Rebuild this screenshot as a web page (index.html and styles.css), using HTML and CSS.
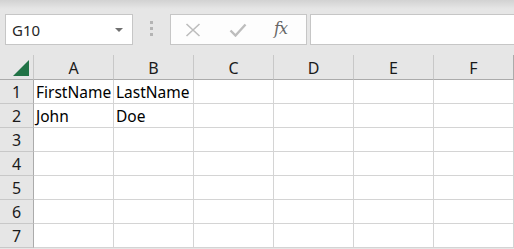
FILE: index.html
```
<!DOCTYPE html>
<html>
<head>
<meta charset="utf-8">
<link rel="stylesheet" href="styles.css">
</head>
<body>
<div class="toolbar">
  <div class="namebox">
    <span class="name">G10</span>
    <span class="arrow"></span>
  </div>
  <div class="grip"><i></i><i></i><i></i></div>
  <div class="fbuttons">
    <svg class="ico-x" width="16" height="14" viewBox="0 0 16 14"><path d="M1.5 1 L14.5 13 M14.5 1 L1.5 13" stroke="#bdbdbd" stroke-width="1.6" fill="none"/></svg>
    <svg class="ico-check" width="18" height="14" viewBox="0 0 18 14"><path d="M1.5 7.5 L6.5 12.5 L16.5 1.5" stroke="#bdbdbd" stroke-width="2.4" fill="none"/></svg>
    <span class="fx">fx</span>
  </div>
  <div class="finput"></div>
</div>
<div class="sheet">
  <div class="corner"><span class="tri"></span></div>
  <div class="ch">A</div><div class="ch">B</div><div class="ch">C</div><div class="ch">D</div><div class="ch">E</div><div class="ch last">F</div>

  <div class="rh">1</div><div class="c">FirstName</div><div class="c">LastName</div><div class="c"></div><div class="c"></div><div class="c"></div><div class="c"></div>
  <div class="rh">2</div><div class="c">John</div><div class="c">Doe</div><div class="c"></div><div class="c"></div><div class="c"></div><div class="c"></div>
  <div class="rh">3</div><div class="c"></div><div class="c"></div><div class="c"></div><div class="c"></div><div class="c"></div><div class="c"></div>
  <div class="rh">4</div><div class="c"></div><div class="c"></div><div class="c"></div><div class="c"></div><div class="c"></div><div class="c"></div>
  <div class="rh">5</div><div class="c"></div><div class="c"></div><div class="c"></div><div class="c"></div><div class="c"></div><div class="c"></div>
  <div class="rh">6</div><div class="c"></div><div class="c"></div><div class="c"></div><div class="c"></div><div class="c"></div><div class="c"></div>
  <div class="rh">7</div><div class="c"></div><div class="c"></div><div class="c"></div><div class="c"></div><div class="c"></div><div class="c"></div>
</div>
</body>
</html>
```
FILE: styles.css
```
html, body {
  margin: 0;
  padding: 0;
  background: #e6e6e6;
  overflow: hidden;
  font-family: "Noto Sans", "Open Sans", sans-serif;
}
.toolbar {
  height: 55px;
  box-sizing: border-box;
  padding: 14px 0 0 5px;
  display: flex;
  align-items: flex-start;
  background: linear-gradient(#d2d2d2 0px, #e6e6e6 9px, #e6e6e6 100%);
}
.namebox {
  width: 128px;
  height: 31px;
  box-sizing: border-box;
  background: #fff;
  border: 1px solid #c6c6c6;
  display: flex;
  align-items: center;
  justify-content: space-between;
  padding: 0 9px 0 6px;
}
.name {
  font-size: 15px;
  color: #262626;
}
.arrow {
  width: 0;
  height: 0;
  border-left: 4px solid transparent;
  border-right: 4px solid transparent;
  border-top: 4px solid #707070;
  margin-top: 1px;
}
.grip {
  width: 37px;
  display: flex;
  flex-direction: column;
  align-items: center;
  gap: 3px;
  padding-top: 7px;
}
.grip i {
  display: block;
  width: 3px;
  height: 3px;
  background: #b4b4b4;
}
.fbuttons {
  width: 137px;
  height: 31px;
  box-sizing: border-box;
  background: #fdfdfd;
  border: 1px solid #c6c6c6;
  display: flex;
  align-items: center;
  padding-left: 14px;
}
.ico-x { margin-top: 1px; }
.ico-check { margin-left: 28px; margin-top: 1px; }
.fx {
  margin-left: 27px;
  font-family: "DejaVu Serif", "Liberation Serif", serif;
  font-style: italic;
  font-size: 16px;
  color: #666;
  letter-spacing: -1px;
  margin-top: -2px;
}
.finput {
  margin-left: 3px;
  flex: 1;
  height: 31px;
  box-sizing: border-box;
  background: #fff;
  border: 1px solid #c6c6c6;
  border-right: none;
}
.sheet {
  display: grid;
  grid-template-columns: 34px repeat(6, 80px);
  grid-template-rows: 25px repeat(7, 24px);
  font-size: 15px;
}
.corner {
  border-right: 1px solid #c8c8c8;
  border-bottom: 1px solid #ababab;
  position: relative;
}
.tri {
  position: absolute;
  left: 13px;
  top: 5px;
  width: 0;
  height: 0;
  border-left: 16px solid transparent;
  border-bottom: 16px solid #217346;
}
.ch {
  border-right: 1px solid #c8c8c8;
  border-bottom: 1px solid #ababab;
  display: flex;
  align-items: center;
  justify-content: center;
  color: #1a1a1a;
  font-size: 16px;
  padding-top: 1px;
}
.ch.last {
  border-right-color: #ababab;
}
.rh {
  border-right: 1px solid #ababab;
  border-bottom: 1px solid #c8c8c8;
  display: flex;
  align-items: center;
  justify-content: center;
  color: #1a1a1a;
  font-size: 16px;
}
.c {
  background: #fff;
  border-right: 1px solid #d4d4d4;
  border-bottom: 1px solid #d4d4d4;
  display: flex;
  align-items: center;
  padding-left: 2px;
  color: #000;
  font-size: 15.5px;
  white-space: nowrap;
  overflow: hidden;
}
```
